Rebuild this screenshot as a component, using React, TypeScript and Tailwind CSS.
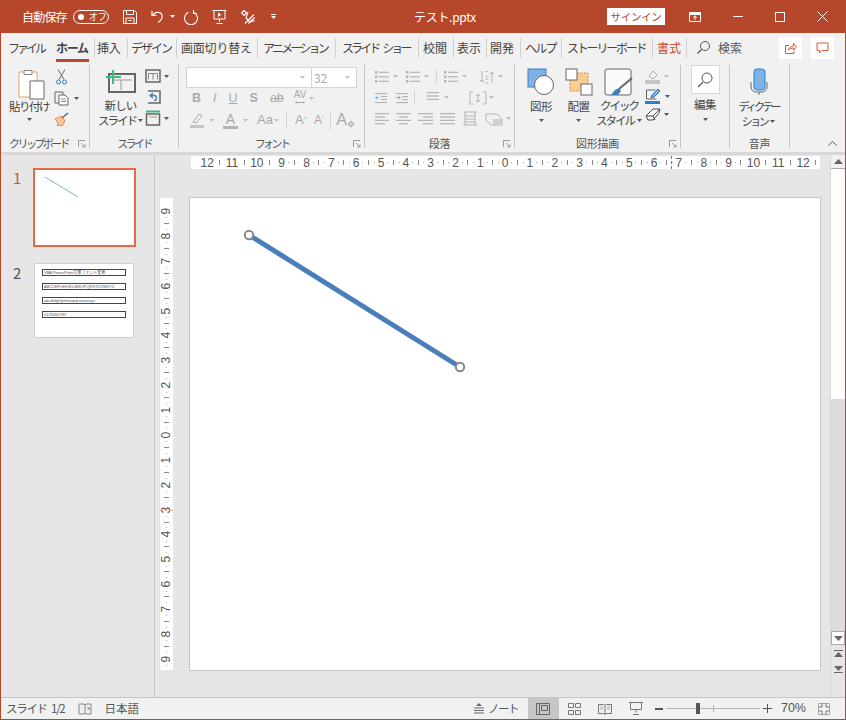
import React from 'react';

const D = '#b4b4b4';
const BLUE = '#7fb2e5';
const FONT = "font-['Noto_Sans_CJK_JP','Noto_Sans',sans-serif]";

const Caret = ({ c = '#555' }: { c?: string }) => (
  <svg width="5" height="3" viewBox="0 0 5 3" className="shrink-0"><path d="M0 0h5L2.500 3z" fill={c} /></svg>
);

const Launcher = () => (
  <svg width="8" height="8" viewBox="0 0 8 8" fill="none" stroke="#999" strokeWidth="1"><path d="M.5 7V.5H7M3 3l4 4M7 4.500V7H4.500" /></svg>
);

const Svg = ({ w = 16, h = 16, children, className }: { w?: number; h?: number; children: React.ReactNode; className?: string }) => (
  <svg width={w} height={h} viewBox={`0 0 ${w} ${h}`} fill="none" className={`shrink-0 ${className ?? ''}`}>{children}</svg>
);

// paragraph alignment lines
const Lines = ({ widths, c = D, x = [1, 1, 1, 1] }: { widths: number[]; c?: string; x?: number[] }) => (
  <Svg w={15} h={13}>
    {widths.map((w, i) => (
      <rect key={i} x={x[i]} y={1 + i * 3.4} width={w} height="1.200" fill={c} />
    ))}
  </Svg>
);

const Bullets = () => (
  <Svg w={16} h={13}>
    {[1, 5.500, 10].map((y) => (
      <g key={y}>
        <rect x="1" y={y} width="2.500" height="2.500" fill={D} />
        <rect x="5" y={y + 0.700} width="10" height="1.200" fill={D} />
      </g>
    ))}
  </Svg>
);

const Indent = ({ flip }: { flip?: boolean }) => (
  <Svg w={14} h={12}>
    <g fill={D}>
      <rect x="1" y="1" width="12" height="1.100" />
      <rect x="7" y="4" width="6" height="1.100" />
      <rect x="7" y="7" width="6" height="1.100" />
      <rect x="1" y="10" width="12" height="1.100" />
    </g>
    <path d={flip ? 'M1 5.600h4M3.500 3.800L5.500 5.600 3.500 7.400' : 'M5.500 5.600h-4M3.500 3.800L1.500 5.600 3.500 7.400'} stroke={BLUE} />
  </Svg>
);

const TitleIcons = () => (
  <>
    {/* save */}
    <Svg w={16} h={16} className="ml-[13px]">
      <path d="M1.500 1.500h11l2 2v11h-13zM4.500 1.500v4h7v-4M4 14.500v-5.500h8v5.500M6.500 11.500h3" stroke="#fff" />
    </Svg>
    {/* undo */}
    <Svg w={16} h={15} className="ml-[12px]">
      <path d="M2 2v4.500h4.500M2.500 6.500C5 3 9 2.500 11 4.500c2.500 2.500 1.500 6-3 9" stroke="#fff" strokeWidth="1.200" />
    </Svg>
    <span className="ml-[4px]"><Caret c="#fff" /></span>
    {/* redo */}
    <Svg w={16} h={16} className="ml-[8px]">
      <path d="M5.500 3.200A6.500 6.500 0 1 0 10.500 3.200M5.500 1v3.500H2" stroke="#fff" strokeWidth="1.100" transform="matrix(-1 0 0 1 16 0)" />
    </Svg>
    {/* from beginning */}
    <Svg w={15} h={16} className="ml-[13px]">
      <path d="M.5 1.500h14M2 1.500v8.500h11v-8.500M7.500 10v3M4.500 14.500h6" stroke="#fff" />
      <path d="M6 3.500l3.500 2.200L6 8z" fill="#fff" />
    </Svg>
    {/* customize touch */}
    <Svg w={16} h={16} className="ml-[13px]">
      <path d="M4 1.500L1.500 4l2.500 2.500L6.500 4zM8 3l-2 6 4 4 4.500-1.500M5 14.500l9-9M8.500 14.500l6-6" stroke="#fff" strokeWidth="1.100" />
    </Svg>
    <span className="ml-[15px] flex flex-col items-center gap-[1px]">
      <span className="block h-[1px] w-[5px] bg-white" />
      <Caret c="#fff" />
    </span>
  </>
);

const TitleBar = () => (
  <div className="relative flex h-[33px] items-center bg-[#b7472a] pl-[21px] text-white">
    <span className="text-[12px] tracking-[-0.800px]">自動保存</span>
    <span className="ml-[6px] flex h-[14px] w-[36px] items-center rounded-full border border-white pl-[4px]">
      <span className="h-[6px] w-[6px] rounded-full bg-white" />
      <span className="ml-[5px] text-[9px] leading-none">オフ</span>
    </span>
    <TitleIcons />
    <span className="absolute left-[413px] text-[12px] tracking-[-0.300px]">テスト.pptx</span>
    <div className="ml-auto flex items-center">
      <span className="flex h-[17px] w-[58px] items-center justify-center bg-white text-[10.500px] tracking-[-0.300px] text-[#b7472a]">サインイン</span>
      <Svg w={12} h={10} className="ml-[24px]">
        <path d="M.5.500h11v9H.5z" stroke="#fff" />
        <path d="M.5 2h11" stroke="#fff" strokeWidth="2" />
        <path d="M6 8V4M4.200 5.500L6 3.800l1.800 1.700" stroke="#fff" />
      </Svg>
      <span className="ml-[32px] h-[1px] w-[10px] bg-white" />
      <span className="ml-[32px] h-[10px] w-[10px] border border-white" />
      <Svg w={11} h={11} className="ml-[32px] mr-[17px]">
        <path d="M.5.500l10 10M10.500.500l-10 10" stroke="#fff" />
      </Svg>
    </div>
  </div>
);

const tabs = [
  { label: 'ファイル', w: 'w-[46px] pl-[6px] tracking-[-3px]' },
  { label: 'ホーム', w: 'w-[46px] pl-[8px] font-bold tracking-[-1.300px]', active: true },
  { label: '挿入', w: 'w-[33px] pl-[2px] tracking-[-0.200px]', sep: true },
  { label: 'デザイン', w: 'w-[49px] pl-[3px] tracking-[-2px]', sep: true },
  { label: '画面切り替え', w: 'w-[81px] pl-[4px] tracking-[-0.200px]', sep: true },
  { label: 'アニメーション', w: 'w-[78px] pl-[5px] tracking-[-2.800px]', sep: true },
  { label: 'スライド ショー', w: 'w-[83px] pl-[6px] tracking-[-2.900px] [word-spacing:4px]', sep: true },
  { label: '校閲', w: 'w-[35px] pl-[4px]', sep: true },
  { label: '表示', w: 'w-[33px] pl-[3px]', sep: true },
  { label: '開発', w: 'w-[34px] pl-[3px]', sep: true },
  { label: 'ヘルプ', w: 'w-[41px] pl-[4px] tracking-[-1.700px]', sep: true },
  { label: 'ストーリーボード', w: 'w-[91px] pl-[5px] tracking-[-2.200px]', sep: true },
  { label: '書式', w: 'w-[35px] pl-[4px] text-[#c8472a] border-r', sep: true },
];

const TabRow = () => (
  <div className="flex h-[29px] items-center bg-[#f1f1f1] text-[12px] text-[#444]">
    <div className="flex h-full items-center pl-[1px]">
      {tabs.map((t) => (
        <div key={t.label} className={`relative flex h-[20px] shrink-0 items-center whitespace-pre border-[#d0d0d0] ${t.w} ${t.sep ? 'border-l' : ''}`}>
          {t.label}
          {t.active && <span className="absolute bottom-[-4px] left-[8px] h-[3px] w-[33px] bg-[#b7472a]" />}
        </div>
      ))}
    </div>
    <div className="flex items-center pl-[9px]">
      <Svg w={15} h={15}>
        <circle cx="9" cy="6" r="4.500" stroke="#555" />
        <path d="M5.500 9.500L1.500 13.500" stroke="#555" strokeWidth="1.200" />
      </Svg>
      <span className="ml-[7px] text-[#555]">検索</span>
    </div>
    <div className="ml-auto mr-[11px] flex items-center gap-[9px]">
      <div className="flex h-[22px] w-[23px] items-center justify-center rounded-[2px] bg-white">
        <Svg w={13} h={12}>
          <path d="M5 3.500H1.500v8h8.500v-3M4.500 8c.5-2.500 2.500-4 5-4V1.500l3 3.500-3 3V6C7.500 6 6 6.500 4.500 8z" stroke="#d9583a" />
        </Svg>
      </div>
      <div className="flex h-[22px] w-[23px] items-center justify-center rounded-[2px] bg-white">
        <Svg w={13} h={12}>
          <path d="M1 1h11v7.500H6L3.500 11V8.500H1z" stroke="#d9583a" />
        </Svg>
      </div>
    </div>
  </div>
);

const Group = ({ w, label, launcher, tight, labelPad, children }: { w: string; label: string; launcher?: boolean; tight?: boolean; labelPad?: string; children: React.ReactNode }) => (
  <div className={`flex h-[83px] shrink-0 flex-col border-r border-[#c6c6c6] ${w}`}>
    <div className="relative flex h-[68px] items-start">{children}</div>
    <div className={`relative mb-[-3px] mt-auto flex h-[15px] items-center justify-center text-[11px] text-[#555] ${tight ? 'tracking-[-2.600px]' : 'tracking-[-0.300px]'} ${labelPad ?? ''}`}>
      {label}
      {launcher && <span className="absolute right-[3px] top-[4px] flex"><Launcher /></span>}
    </div>
  </div>
);

const Clipboard = () => (
  <Group w="w-[88px]" label="クリップボード" launcher tight labelPad="pr-[14px]">
    <div className="flex w-[47px] flex-col items-center pl-[7px] pt-[3px]">
      <Svg w={27} h={32} className="ml-[4px]">
        <path d="M1 4h18v25H1z" fill="#fff" stroke="#e5a261" />
        <path d="M6 2.500h8v4H6z" fill="#fff" stroke="#888" />
        <path d="M12 13h14v18H12z" fill="#fff" stroke="#666" />
      </Svg>
      <span className="mt-[-1px] whitespace-nowrap text-[11.500px] leading-[15px] tracking-[-1.500px] text-[#444]">貼り付け</span>
      <span className="mt-[4px]"><Caret /></span>
    </div>
    <div className="flex flex-col items-start gap-[6px] pl-[5px] pt-[4px]">
      <Svg w={14} h={16} className="ml-[1px]">
        <path d="M3 .5l6 10M10 .5L4 10.500" stroke="#666" />
        <circle cx="3.500" cy="13" r="2" stroke="#3f7fbf" />
        <circle cx="9.500" cy="13" r="2" stroke="#3f7fbf" />
      </Svg>
      <div className="flex items-center gap-[4px]">
        <Svg w={16} h={15}>
          <path d="M1 1h8v11H1z" stroke="#666" fill="#f1f1f1" />
          <path d="M5 4h6l3 3v7H5z" stroke="#666" fill="#fff" />
          <path d="M7 8h5M7 10.500h5" stroke="#888" />
        </Svg>
        <Caret />
      </div>
      <Svg w={15} h={15}>
        <path d="M1 7l6-3 4 5-3 5-3-1-2 1 1-3z" stroke="#e88a4a" fill="#f6c596" />
        <path d="M8 6l6-5" stroke="#666" strokeWidth="1.500" />
      </Svg>
    </div>
  </Group>
);

const Slides = () => (
  <Group w="w-[89px]" label="スライド" tight>
    <div className="flex w-[54px] flex-col items-center pl-[7px] pt-[4px]">
      <Svg w={30} h={24}>
        <path d="M3 5h26v18H3z" fill="#f1f1f1" stroke="#666" strokeWidth="2" />
        <path d="M6 11h20M15 11v10" stroke="#999" />
        <path d="M7 1v14M0 8h15" stroke="#3dbb7c" strokeWidth="2" />
      </Svg>
      <span className="mt-[5px] text-[11.500px] leading-[15px] tracking-[-0.800px] text-[#444]">新しい</span>
      <span className="flex items-center gap-[2px] whitespace-nowrap text-[11.500px] leading-[15px] tracking-[-2px] text-[#444]">スライド<Caret /></span>
    </div>
    <div className="flex flex-col gap-[6px] pl-[1px] pt-[4px]">
      <div className="flex items-center gap-[3px]">
        <Svg w={16} h={14}><path d="M1 1h14v12H1z" stroke="#666" strokeWidth="1.500" /><path d="M3.500 4.500h9M3.500 4.500v6M12.500 4.500v6M8 4.500v6" stroke="#888" /></Svg>
        <Caret />
      </div>
      <Svg w={16} h={15}>
        <path d="M3 2h12v12H3" stroke="#666" strokeWidth="1.500" />
        <path d="M8 4l-3 2.500L8 9M5 6.500h4a2.500 2.500 0 0 1 0 5" stroke="#3f7fbf" strokeWidth="1.300" />
      </Svg>
      <div className="flex items-center gap-[3px]">
        <Svg w={16} h={16}><path d="M1 1.500h14" stroke="#3dbb7c" strokeWidth="2" /><path d="M1.500 4h13v11h-13z" stroke="#666" strokeWidth="1.500" /><path d="M4 7h8" stroke="#999" /></Svg>
        <Caret />
      </div>
    </div>
  </Group>
);

const Combo = ({ w, text }: { w: string; text?: string }) => (
  <div className={`flex h-[21px] items-center justify-between border border-[#d4d4d4] bg-white pl-[2px] pr-[6px] text-[12px] text-[#aaa] ${w}`}>
    <span>{text}</span>
    <Caret c="#c0c0c0" />
  </div>
);

const FontGroup = () => (
  <Group w="w-[186px]" label="フォント" launcher tight>
    <div className="flex flex-col pl-[7px] pt-[2px]">
      <div className="flex">
        <Combo w="w-[126px]" />
        <Combo w="w-[46px] ml-[-1px]" text="32" />
      </div>
      <div className="flex h-[20px] items-center gap-[12px] pl-[6px] font-['Liberation_Sans',sans-serif] text-[12.500px] text-[#aaa]">
        <span className="font-bold">B</span>
        <span className="italic">I</span>
        <span className="underline">U</span>
        <span className="font-bold">S</span>
        <span className="line-through">ab</span>
        <span className="ml-[-2px] flex items-center gap-[3px]">
          <span className="flex flex-col items-center text-[10px] leading-[10px]">AV<span className="text-[7px] leading-[6px]">⟷</span></span>
          <Caret c="#c0c0c0" />
        </span>
      </div>
      <div className="mt-[1px] flex h-[22px] items-center font-['Liberation_Sans',sans-serif] text-[#aaa]">
        <Svg w={16} h={16} className="ml-[3px]">
          <path d="M4 10l6-8 3 2-6 7z" stroke="#aaa" />
          <rect x="1" y="13" width="14" height="3" fill="#c4c4c4" />
        </Svg>
        <span className="ml-[4px]"><Caret c="#c0c0c0" /></span>
        <span className="ml-[9px] flex flex-col items-center text-[14px] leading-[14px]">A<span className="h-[3px] w-[15px] bg-[#b4b4b4]" /></span>
        <span className="ml-[5px]"><Caret c="#c0c0c0" /></span>
        <span className="ml-[9px] text-[13px]">Aa</span>
        <span className="ml-[1px]"><Caret c="#c0c0c0" /></span>
        <span className="ml-[7px] h-[17px] w-[1px] bg-[#d4d4d4]" />
        <span className="ml-[8px] text-[13px]">A<sup className="text-[7px]">^</sup></span>
        <span className="ml-[7px] text-[12px]">A<sup className="text-[7px]">ˇ</sup></span>
        <span className="ml-[6px] h-[17px] w-[1px] bg-[#d4d4d4]" />
        <span className="ml-[5px] text-[16px]">A</span>
        <Svg w={8} h={8} className="mt-[7px]">
          <path d="M1 4l3-3 3 3-3 3z" fill="#e4c9c9" stroke="#aaa" />
        </Svg>
      </div>
    </div>
  </Group>
);

const Paragraph = () => (
  <Group w="w-[150px]" label="段落" launcher>
    <div className="flex flex-col gap-[6px] pl-[9px] pt-[4px]">
      <div className="flex items-center">
        <Bullets />
        <span className="ml-[3px]"><Caret c="#c0c0c0" /></span>
        <span className="ml-[7px]"><Bullets /></span>
        <span className="ml-[3px]"><Caret c="#c0c0c0" /></span>
        <span className="ml-[7px] h-[15px] w-[1px] bg-[#d4d4d4]" />
        <span className="ml-[6px]"><Bullets /></span>
        <span className="ml-[3px]"><Caret c="#c0c0c0" /></span>
        <Svg w={16} h={14} className="ml-[12px]">
          <path d="M3 1v11M1 10l2 2 2-2M13 13V2M11 4l2-2 2 2" stroke={D} />
          <path d="M6.500 1.500h3M6.500 6.500h3M6.500 9h3M6.500 13h3" stroke={D} />
        </Svg>
        <span className="ml-[3px]"><Caret c="#c0c0c0" /></span>
      </div>
      <div className="flex items-center">
        <Indent />
        <span className="ml-[7px]"><Indent flip /></span>
        <span className="ml-[5px] h-[15px] w-[1px] bg-[#d4d4d4]" />
        <span className="ml-[11px] flex items-center gap-[3px]">
          <Lines widths={[12, 12, 12]} />
          <Caret c="#c0c0c0" />
        </span>
        <span className="ml-[20px] flex items-center gap-[2px]">
          <Svg w={18} h={14}><path d="M4 1H1v12h3M14 1h3v12h-3M9 3v8M7 5l2-2 2 2M7 9l2 2 2-2" stroke={D} /></Svg>
          <Caret c="#c0c0c0" />
        </span>
      </div>
      <div className="flex items-center gap-[7px]">
        <Lines widths={[15, 10, 15, 10]} />
        <Lines widths={[15, 9, 15, 9]} x={[0, 3, 0, 3]} />
        <Lines widths={[15, 10, 15, 10]} x={[0, 5, 0, 5]} />
        <Lines widths={[15, 15, 15, 15]} x={[0, 0, 0, 0]} />
        <Svg w={16} h={15}><path d="M1 1h14M1 14h14M3 1v13M13 1v13M3 5h10M3 8h10M3 11h10" stroke={D} /></Svg>
        <span className="flex items-center gap-[1px]">
          <Svg w={20} h={14}><path d="M1 2h11l5 5v6H6l-5-5z" stroke={D} /><path d="M8 7h10v6H8z" fill="#cfcfcf" /></Svg>
          <Caret c="#c0c0c0" />
        </span>
      </div>
    </div>
  </Group>
);

const Drawing = () => (
  <Group w="w-[166px]" label="図形描画" launcher>
    <div className="flex w-[44px] flex-col items-center pl-[8px] pt-[3px]">
      <Svg w={28} h={28}>
        <rect x="1" y="1" width="18" height="18" fill={BLUE} stroke="#3f7fbf" />
        <circle cx="17" cy="17" r="9.500" fill="#fff" stroke="#666" />
      </Svg>
      <span className="mt-[2px] text-[11.500px] tracking-[-0.500px] text-[#444]">図形</span>
      <span className="mt-[4px]"><Caret /></span>
    </div>
    <div className="flex w-[39px] flex-col items-center pt-[3px]">
      <Svg w={28} h={28}>
        <rect x="5" y="5" width="18" height="18" fill="#f6cf90" stroke="#e07a3a" strokeDasharray="2 1.500" />
        <rect x="1" y="1" width="11" height="11" fill="#fff" stroke="#666" />
        <rect x="16" y="16" width="11" height="11" fill="#fff" stroke="#666" />
      </Svg>
      <span className="mt-[2px] text-[11.500px] tracking-[-0.500px] text-[#444]">配置</span>
      <span className="mt-[4px]"><Caret /></span>
    </div>
    <div className="flex w-[42px] flex-col items-center pt-[3px]">
      <Svg w={30} h={29}>
        <rect x="1" y="1" width="26" height="26" rx="2" fill="#fafafa" stroke="#666" />
        <path d="M28 10L15 21" stroke="#666" strokeWidth="2" />
        <path d="M15 20l-4 2-4 5h7l3-4z" fill="#3f7fbf" />
      </Svg>
      <span className="mt-[1px] whitespace-nowrap text-[11.500px] leading-[15px] tracking-[-2px] text-[#444]">クイック</span>
      <span className="flex items-center gap-[3px] whitespace-nowrap text-[11.500px] leading-[15px] tracking-[-2px] text-[#444]">スタイル<Caret /></span>
    </div>
    <div className="flex flex-col gap-[4px] pl-[5px] pt-[3px]">
      <div className="flex items-center gap-[3px]">
        <Svg w={16} h={16}><path d="M4 8l4-5 4 4-4 4z" stroke="#aaa" /><rect y="12" width="15" height="4" fill="#c4c4c4" /></Svg>
        <Caret c="#c0c0c0" />
      </div>
      <div className="flex items-center gap-[4px]">
        <Svg w={16} h={16}>
          <path d="M1.500 2h9M1.500 2v9h10" stroke="#666" />
          <path d="M6 10l1-3 6-6 2 2-6 6z" fill="#7fb2e5" stroke="#2f6fb0" />
          <rect y="13" width="15" height="3" fill="#2f7fc4" />
        </Svg>
        <Caret />
      </div>
      <div className="flex items-center gap-[3px]">
        <Svg w={16} h={13}><path d="M1 8l7-7h7l-1 4-6 7H3z" fill="#fff" stroke="#444" /><path d="M1 8h7l2 4M8 8l7-7" stroke="#444" /></Svg>
        <Caret />
      </div>
    </div>
  </Group>
);

const EditGroup = () => (
  <Group w="w-[49px]" label="">
    <div className="flex w-full flex-col items-center">
      <div className="flex h-[29px] w-[29px] items-center justify-center border border-[#d8d8d8] bg-white">
        <Svg w={16} h={16}>
          <circle cx="10" cy="6" r="5" stroke="#555" />
          <path d="M6 10l-5 5" stroke="#555" strokeWidth="1.300" />
        </Svg>
      </div>
      <span className="mt-[2px] text-[11.500px] tracking-[-0.500px] text-[#444]">編集</span>
      <span className="mt-[5px]"><Caret /></span>
    </div>
  </Group>
);

const Voice = () => (
  <Group w="w-[60px]" label="音声">
    <div className="flex w-full flex-col items-center pr-[2px] pt-[3px]">
      <Svg w={20} h={27}>
        <rect x="5" y="1" width="11" height="21" rx="3" fill={BLUE} stroke="#2f7fc4" />
        <path d="M2 14v5a5 5 0 0 0 5 5h6a5 5 0 0 0 5-5v-5M10 24v3" stroke="#666" />
      </Svg>
      <span className="mt-[4px] whitespace-nowrap text-[11px] leading-[15px] tracking-[-2.800px] text-[#444]">ディクテー</span>
      <span className="flex items-center gap-[3px] whitespace-nowrap text-[11px] leading-[15px] tracking-[-2.500px] text-[#444]">ション<Caret /></span>
    </div>
  </Group>
);

const Ribbon = () => (
  <div className="relative flex h-[90px] items-start bg-[#f1f1f1] pl-[1px] pt-[3px]">
    <Clipboard />
    <Slides />
    <FontGroup />
    <Paragraph />
    <Drawing />
    <EditGroup />
    <Voice />
    <Svg w={9} h={5} className="ml-[38px] mt-[76px]">
      <path d="M.5 4.500L4.500.500l4 4" stroke="#555" />
    </Svg>
  </div>
);

const Thumbs = () => (
  <div className="flex w-[154px] shrink-0 flex-col border-r border-[#c6c6c6] pl-[12px] pt-[13px] text-[#555]">
    <div className="flex items-start">
      <span className="w-[20px] text-[15px] leading-[20px] text-[#c8573a]">1</span>
      <div className="h-[79px] w-[103px] border-2 border-[#e8694a] bg-white">
        <svg width="99" height="75" className="block"><path d="M10 7L43 27" stroke="#7fb2e5" /></svg>
      </div>
    </div>
    <div className="mt-[16px] flex items-start">
      <span className="w-[21px] text-[15px] leading-[20px]">2</span>
      <div className="flex h-[75px] w-[100px] flex-col gap-[7px] border border-[#d0d0d0] bg-white px-[7px] pt-[5px] font-['Liberation_Sans','Noto_Sans_CJK_JP',sans-serif] text-[4px] leading-[5px] text-[#555]">
        {['VBA PowerPoint文書フォント変更', 'ABCDEFGHIJKLMNOPQRSTUVWXYZ', 'abcdefghijklmnopqrstuvwxyz', '0123456789'].map((t) => (
          <div key={t} className="h-[7px] overflow-hidden whitespace-nowrap border border-[#444] pl-[1px]">{t}</div>
        ))}
      </div>
    </div>
  </div>
);

const hNums = [12, 11, 10, 9, 8, 7, 6, 5, 4, 3, 2, 1, 0, 1, 2, 3, 4, 5, 6, 7, 8, 9, 10, 11, 12];
const vNums = [9, 8, 7, 6, 5, 4, 3, 2, 1, 0, 1, 2, 3, 4, 5, 6, 7, 8, 9];

const HRuler = () => (
  <div className="relative ml-[36px] flex h-[13px] w-[629px] items-center overflow-hidden bg-white pl-[10px] font-['Liberation_Sans',sans-serif] text-[12px] text-[#555]">
    {hNums.map((n, i) => (
      <div key={i} className="flex w-[24.830px] shrink-0 items-center">
        <span className="flex w-[12.400px] shrink-0 justify-center">{n}</span>
        <span className="flex w-[12.400px] shrink-0 items-center justify-between">
          <span className={`h-[1px] w-[1px] ${n < 10 ? 'bg-[#aaa]' : ''}`} />
          <span className="h-[5px] w-[1px] bg-[#888]" />
          <span className={`h-[1px] w-[1px] ${n < 9 ? 'bg-[#aaa]' : ''}`} />
        </span>
      </div>
    ))}
    <span className="absolute left-[480px] top-0 h-[13px] border-l border-dashed border-[#d9583a]" />
  </div>
);

const VRuler = () => (
  <div className="relative mt-[1px] flex h-[472px] w-[13px] shrink-0 flex-col overflow-hidden bg-white pt-[7px] font-['Liberation_Sans',sans-serif] text-[12px] text-[#555]">
    {vNums.map((n, i) => (
      <div key={i} className="flex h-[24.880px] shrink-0 flex-col items-center">
        <span className="flex h-[12.400px] shrink-0 -rotate-90 items-center justify-center leading-none">{n}</span>
        <span className="flex h-[12.400px] shrink-0 flex-col items-center justify-between">
          <span className="h-[1px] w-[1px] bg-[#aaa]" />
          <span className="h-[1px] w-[5px] bg-[#888]" />
          <span className="h-[1px] w-[1px] bg-[#aaa]" />
        </span>
      </div>
    ))}
    <span className="absolute left-0 top-[312px] w-[13px] border-t border-dashed border-[#e8b0a0]" />
  </div>
);

const Handle = ({ cx, cy }: { cx: number; cy: number }) => (
  <circle cx={cx} cy={cy} r="4.200" fill="#fff" stroke="#888" strokeWidth="2" />
);

const Canvas = () => (
  <div className="flex min-w-0 flex-1 flex-col pt-[1px]">
    <HRuler />
    <div className="flex pl-[5px] pt-[28px]">
      <VRuler />
      <div className="ml-[16px] h-[474px] w-[632px] shrink-0 border border-[#c6c6c6] bg-white">
        <svg width="630" height="472" className="block">
          <path d="M59 37L270 169" stroke="#4a7ebb" strokeWidth="5" />
          <Handle cx={59} cy={37} />
          <Handle cx={270} cy={169} />
        </svg>
      </div>
    </div>
  </div>
);

const Scrollbar = () => (
  <div className="flex w-[15px] shrink-0 flex-col items-stretch border-l border-[#d8d8d8] bg-[#dcdcdc]">
    <div className="flex h-[14px] items-center justify-center border-b border-[#aaa] bg-[#f1f1f1]">
      <svg width="9" height="5"><path d="M0 5h9L4.500 0z" fill="#666" /></svg>
    </div>
    <div className="h-[230px] bg-white" />
    <div className="flex-1" />
    <div className="flex h-[14px] items-center justify-center border border-[#aaa] bg-white">
      <svg width="9" height="5"><path d="M0 0h9L4.500 5z" fill="#666" /></svg>
    </div>
    <div className="flex h-[52px] flex-col items-center gap-[7px] bg-[#e6e6e6] pt-[4px]">
      <svg width="9" height="9"><path d="M0 1h9v1H0zM0 8h9L4.500 3z" fill="#666" /></svg>
      <svg width="9" height="9"><path d="M0 8h9v-1H0zM0 1h9L4.500 6z" fill="#666" /></svg>
    </div>
  </div>
);

const StatusBar = () => (
  <div className="flex h-[22px] items-center border-t border-[#c6c6c6] bg-[#f1f1f1] text-[11.500px] text-[#555]">
    <span className="pl-[5px] tracking-[-1.300px] [word-spacing:3px]">スライド 1/2</span>
    <Svg w={14} h={12} className="ml-[14px]">
      <path d="M1 1h5l1 1 1-1h5v10H8l-1-1-1 1H1zM7 2v8" stroke="#888" />
      <path d="M9.500 4l2.500 3M12 4L9.500 7" stroke="#888" />
    </Svg>
    <span className="ml-[12px] text-[11.500px]">日本語</span>
    <div className="ml-auto flex h-full items-center">
      <Svg w={12} h={11}>
        <path d="M6 0l3 3H3z" fill="#666" />
        <path d="M1 5h10M1 7.500h10M1 10h10" stroke="#666" />
      </Svg>
      <span className="ml-[3px] w-[40px] tracking-[-1.500px]">ノート</span>
      <div className="flex h-full w-[31px] items-center justify-center bg-[#c6c6c6]">
        <Svg w={14} h={12}><path d="M.5.500h13v11H.5zM3.500.500v11M5.500 2.500h6v5h-6z" stroke="#666" /></Svg>
      </div>
      <div className="flex w-[31px] items-center justify-center">
        <Svg w={13} h={12}><path d="M.5.500h5v4h-5zM7.500.500h5v4h-5zM.5 7.500h5v4h-5zM7.500 7.500h5v4h-5z" stroke="#777" /></Svg>
      </div>
      <div className="flex w-[31px] items-center justify-center">
        <Svg w={14} h={12}><path d="M.5 1.500h5l1.500 1 1.500-1h5v9h-5L7 11.500l-1.500-1h-5zM7 2.500v9" stroke="#777" /><path d="M2 4h3M2 6h3M9 4h3M9 6h3" stroke="#aaa" /></Svg>
      </div>
      <div className="flex w-[31px] items-center justify-center">
        <Svg w={14} h={13}><path d="M0 .5h14M1.500.5v7h11v-7M7 7.500v3M4 12.500h6" stroke="#777" /></Svg>
      </div>
      <div className="ml-[3px] flex items-center">
        <span className="h-[2px] w-[8px] bg-[#555]" />
        <div className="relative mx-[3px] h-[1px] w-[94px] bg-[#b4b4b4]">
          <span className="absolute left-[30px] top-[-5px] h-[11px] w-[4px] bg-[#555]" />
          <span className="absolute left-[47px] top-[-3px] h-[7px] w-[1px] bg-[#b4b4b4]" />
        </div>
        <Svg w={9} h={9}><path d="M0 4.500h9M4.500 0v9" stroke="#555" /></Svg>
      </div>
      <span className="ml-[9px] font-['Liberation_Sans',sans-serif] text-[12.500px]">70%</span>
      <Svg w={12} h={12} className="ml-[12px] mr-[15px]">
        <path d="M.5.500h11v11H.5z" stroke="#aaa" />
        <path d="M.5 4h3.500V.5M8 .5V4h3.500M11.500 8H8v3.500M4 11.500V8H.5" stroke="#777" />
      </Svg>
    </div>
  </div>
);

export default function App() {
  return (
    <div className={`flex h-[720px] w-[846px] flex-col overflow-hidden border-x border-b border-[#b7472a] ${FONT}`}>
      <TitleBar />
      <TabRow />
      <Ribbon />
      <div className="h-[3px] bg-[#d8d8d8]" />
      <div className="flex min-h-0 flex-1 bg-[#e6e6e6]">
        <Thumbs />
        <Canvas />
        <Scrollbar />
      </div>
      <StatusBar />
    </div>
  );
}
